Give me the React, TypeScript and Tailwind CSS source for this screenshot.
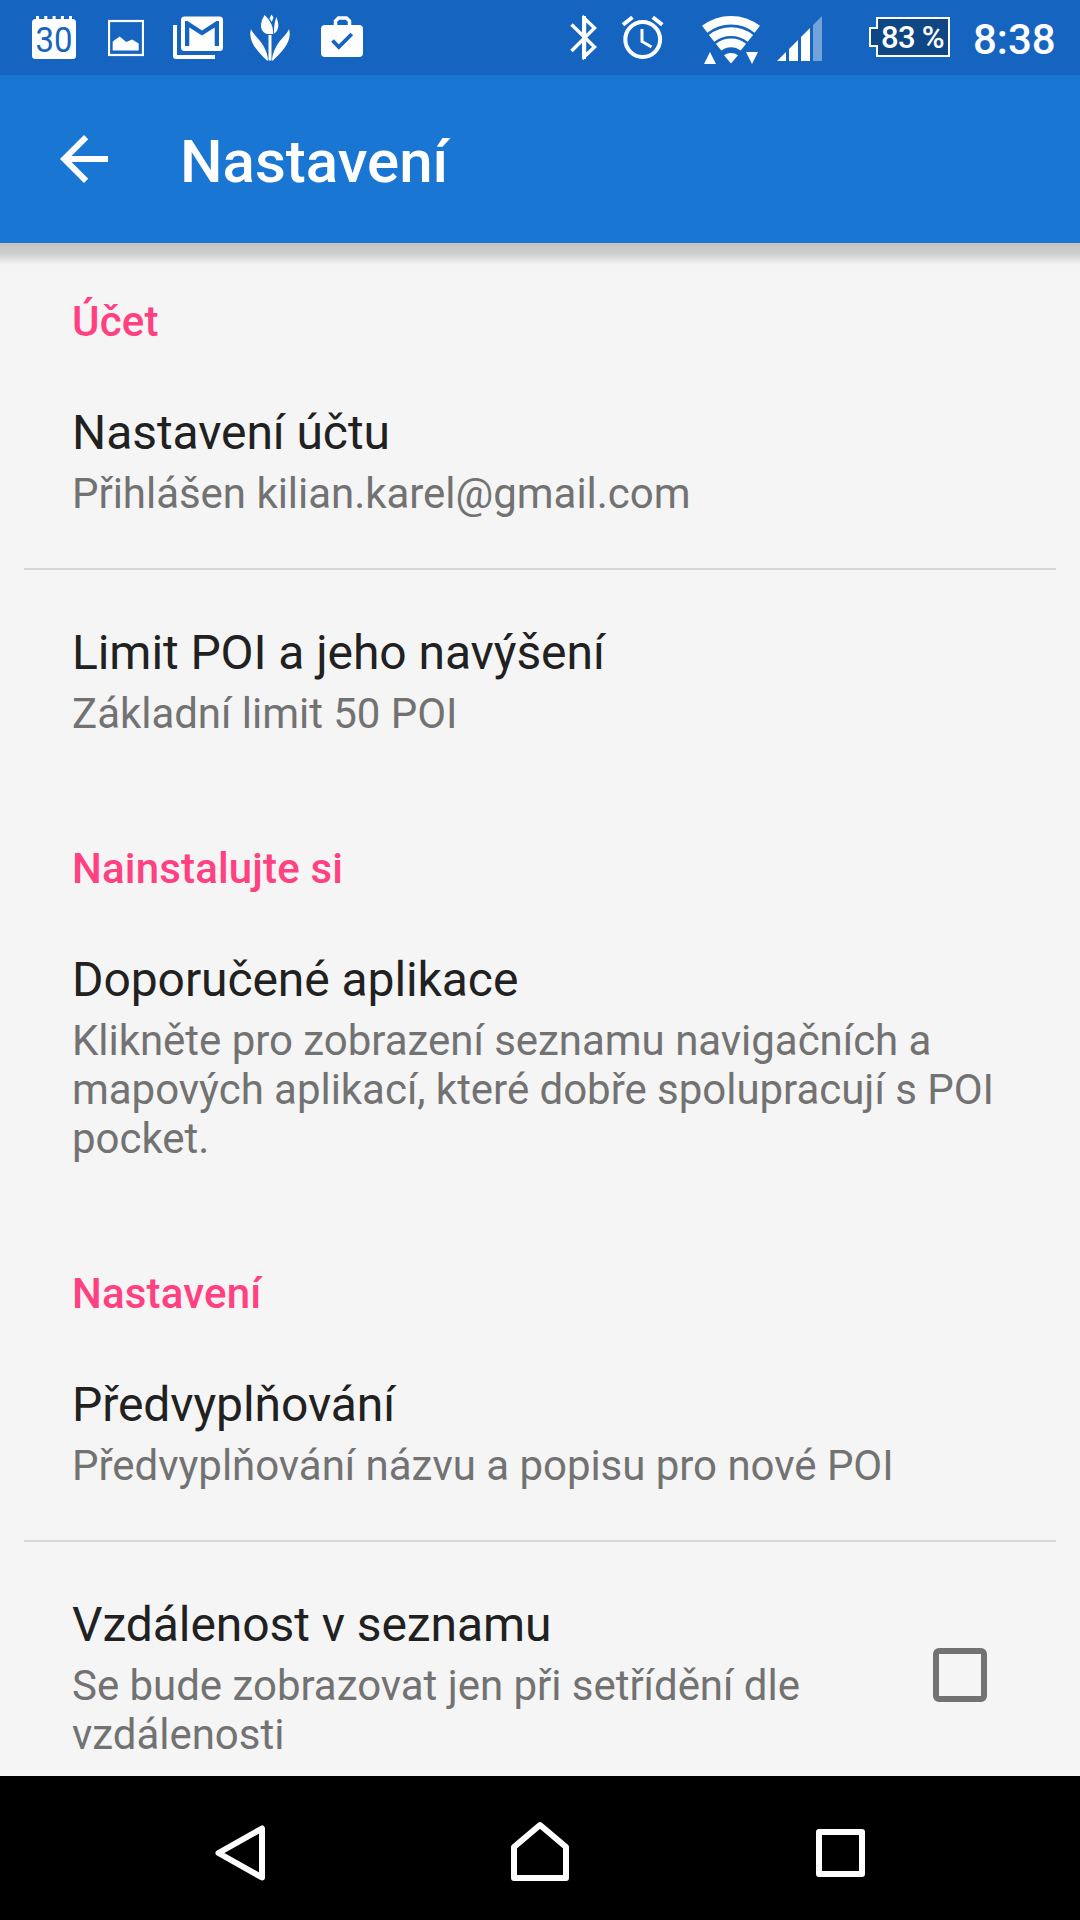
import type { ReactNode } from "react";

function StatusBar() {
  return (
    <div className="flex h-[75px] shrink-0 items-start bg-[#1565c0] text-white">
      <svg className="ml-8 h-[75px] w-11" viewBox="32 0 44 75" fill="currentColor">
        <rect x="32" y="19" width="44" height="40" rx="3.5" />
        <path d="M36 16h3v4h-3zM44.3 16h3v4h-3zM52.600 16h3v4h-3zM60.900 16h3v4h-3zM69 16h3v4h-3z" />
        <text
          x="35.500"
          y="52"
          fill="#1565c0"
          fontFamily="Roboto, sans-serif"
          fontSize="35"
          fontWeight="400"
          textLength="37"
          lengthAdjust="spacingAndGlyphs"
        >
          30
        </text>
      </svg>
      <svg className="ml-8 h-[75px] w-9" viewBox="108 0 36 75">
        <rect x="109" y="21" width="34" height="34" fill="none" stroke="currentColor" strokeWidth="2.200" />
        <path d="M112.700 50.500v-9l7-5 6.500 5.500 6-2.500 6.500 4v7z" fill="currentColor" />
      </svg>
      <svg className="ml-[29px] h-[75px] w-[50px]" viewBox="173 0 50 75" fill="currentColor">
        <path d="M173 25h4v30h38v4h-39a3 3 0 0 1-3-3z" />
        <rect x="181" y="16.500" width="42" height="34.500" rx="3.500" />
        <path d="M185 46V21h2.500L202 30.500 216.500 21h2.500v25h-4.300V27.500L202 35.500l-12.700-8V46z" fill="#1565c0" />
      </svg>
      <svg className="ml-[27px] h-[75px] w-10" viewBox="250 0 40 75" fill="currentColor">
        <path d="M264.500 15c3 3 9.500 9 8.500 19h-6c-5-2-7-6-5.500-12 .5-3 2-4.500 3-7z" />
        <path d="M269.500 18.500l2-4 2 3-1.700 4.500zM276.500 17c1 4 3 8 1 12.500-.8 2-2 3.500-3.800 4.200.8-8 .3-10.500 2.800-16.700z" />
        <path d="M268.500 35h3v25.500h-3z" />
        <path d="M251 29c1.500 5 8.500 9.500 13 18 2.500 5 4 9 4 13.500h-1C257 51 247.500 41 251 29zM289 29c-1.500 5-8.500 9.500-13 18-2.500 5-4 9-4 13.500h1C283 51 292.500 41 289 29z" />
      </svg>
      <svg className="ml-[31px] h-[75px] w-[42px]" viewBox="321 0 42 75">
        <rect x="321" y="25" width="42" height="32" rx="4" fill="currentColor" />
        <path d="M335.500 26v-5l3-3h8l3 3v5" fill="none" stroke="currentColor" strokeWidth="3.500" />
        <path d="M332.500 40.500l6.300 6.500 13-13" fill="none" stroke="#1565c0" strokeWidth="3.800" />
      </svg>

      <svg className="ml-[207px] h-[75px] w-7" viewBox="570 0 28 75" fill="none" stroke="currentColor">
        <path d="M571.500 24.500l23 22.500-10 9.500v-38l10 9.500-23 23" strokeWidth="3.400" strokeLinejoin="miter" />
        <path d="M584 16v43" strokeWidth="4" />
      </svg>
      <svg className="ml-[23px] h-[75px] w-[44px]" viewBox="621 0 44 75" fill="none" stroke="currentColor">
        <circle cx="642.700" cy="39.500" r="17.400" strokeWidth="4" />
        <path d="M642 29v12.500l9.500 5.500" strokeWidth="3" />
        <path d="M623 24.800l9.500-7.500M662.300 24.800l-9.500-7.500" strokeWidth="4" />
      </svg>
      <svg className="ml-9 h-[75px] w-[60px]" viewBox="701 0 60 75">
        <g fill="none" stroke="currentColor" strokeWidth="8.700">
          <path d="M704.700 29.300A42.700 42.700 0 0 1 757.300 29.300" />
          <path d="M711.600 38.400A31.300 31.300 0 0 1 750.400 38.400" />
          <path d="M718.600 47.200A20 20 0 0 1 743.400 47.200" />
        </g>
        <path
          d="M731 63.500l-7-8.300a12 12 0 0 1 14 0zM704 64l6-12 6 12zM746 52h12l-6 12z"
          fill="currentColor"
        />
      </svg>
      <svg className="ml-4 h-[75px] w-[45px]" viewBox="777 0 45 75" fill="currentColor">
        <path d="M777 61l9-9v9zM789 49l9-9v21h-9zM801 37l9-9v33h-9z" />
        <path d="M813 25l9-9v45h-9z" opacity="0.4" />
      </svg>
      <div className="relative ml-[47px] mt-[17px] h-10 w-[81px]">
        <svg className="h-10 w-[81px]" viewBox="869 17 81 40">
          <path d="M877 18h72v38h-72V46h-7V28h7z" fill="#0f4684" stroke="white" strokeWidth="2" />
        </svg>
        <span className="absolute left-3 top-px whitespace-nowrap text-[31px] font-medium leading-10 tracking-[-0.7px]">
          83 %
        </span>
      </div>
      <span className="ml-[23px] mt-[15px] whitespace-nowrap text-[42px] font-medium leading-[49px]">8:38</span>
    </div>
  );
}

function Toolbar() {
  return (
    <header className="relative flex h-[168px] shrink-0 items-center bg-[#1976d2] text-white">
      <svg className="ml-12 size-[72px]" viewBox="0 0 24 24" fill="currentColor">
        <path d="M20 11H7.830l5.590-5.590L12 4l-8 8 8 8 1.410-1.410L7.830 13H20v-2z" />
      </svg>
      <h1 className="ml-15 mt-1.5 text-[60px] font-medium leading-[70px]">Nastavení</h1>
      <div className="absolute inset-x-0 top-full h-[22px] bg-linear-to-b from-[#c2c2c2] via-[#d0d0d0] to-[#f5f5f5]" />
    </header>
  );
}

function Category({ children }: { children: ReactNode }) {
  return (
    <h2 className="pb-1 pl-18 pt-14 text-[42px] font-medium leading-[49px] tracking-[0.17px] text-[#ff4081]">
      {children}
    </h2>
  );
}

function Preference({ title, lines, checkbox }: { title: string; lines: string[]; checkbox?: boolean }) {
  return (
    <div className="flex shrink-0 items-center justify-between pb-[50px] pl-18 pr-[93px] pt-[55px]">
      <div className="whitespace-nowrap">
        <div className="text-[48px] leading-14 tracking-[-0.08px] text-[#212121]">{title}</div>
        <div className="mt-2 text-[42px] leading-[49px] tracking-[-0.03px] text-[#727272]">
          {lines.map((line) => (
            <div key={line}>{line}</div>
          ))}
        </div>
      </div>
      {checkbox && (
        <div role="checkbox" aria-checked="false" className="mb-1.5 size-[54px] rounded-md border-6 border-[#727272]" />
      )}
    </div>
  );
}

function Divider() {
  return <div className="mx-6 h-0.5 shrink-0 bg-[#d7d7d7]" />;
}

function NavigationBar() {
  return (
    <nav className="flex h-36 shrink-0 bg-black text-white">
      <svg
        className="ml-[212px] h-36 w-14"
        viewBox="212 1776 56 144"
        fill="none"
        stroke="currentColor"
        strokeWidth="6"
        strokeLinejoin="round"
      >
        <path d="M262 1828.500v49L218.500 1853z" />
      </svg>
      <svg
        className="ml-[240px] h-36 w-16"
        viewBox="508 1776 64 144"
        fill="none"
        stroke="currentColor"
        strokeWidth="6"
        strokeLinejoin="round"
      >
        <path d="M514 1878v-31l26-22 26 22v31z" />
      </svg>
      <svg
        className="ml-[241px] h-36 w-14"
        viewBox="813 1776 56 144"
        fill="none"
        stroke="currentColor"
        strokeWidth="6"
        strokeLinejoin="round"
      >
        <path d="M819 1832h43v42h-43z" />
      </svg>
    </nav>
  );
}

export default function App() {
  return (
    <div className="flex h-[1920px] w-[1080px] flex-col overflow-hidden bg-[#f5f5f5] font-['Roboto',sans-serif]">
      <StatusBar />
      <Toolbar />
      <main className="-mt-0.5 flex min-h-0 flex-1 flex-col overflow-hidden">
        <Category>Účet</Category>
        <Preference title="Nastavení účtu" lines={["Přihlášen kilian.karel@gmail.com"]} />
        <Divider />
        <Preference title="Limit POI a jeho navýšení" lines={["Základní limit 50 POI"]} />
        <Category>Nainstalujte si</Category>
        <Preference
          title="Doporučené aplikace"
          lines={[
            "Klikněte pro zobrazení seznamu navigačních a",
            "mapových aplikací, které dobře spolupracují s POI",
            "pocket.",
          ]}
        />
        <Category>Nastavení</Category>
        <Preference title="Předvyplňování" lines={["Předvyplňování názvu a popisu pro nové POI"]} />
        <Divider />
        <Preference
          title="Vzdálenost v seznamu"
          lines={["Se bude zobrazovat jen při setřídění dle", "vzdálenosti"]}
          checkbox
        />
      </main>
      <NavigationBar />
    </div>
  );
}
